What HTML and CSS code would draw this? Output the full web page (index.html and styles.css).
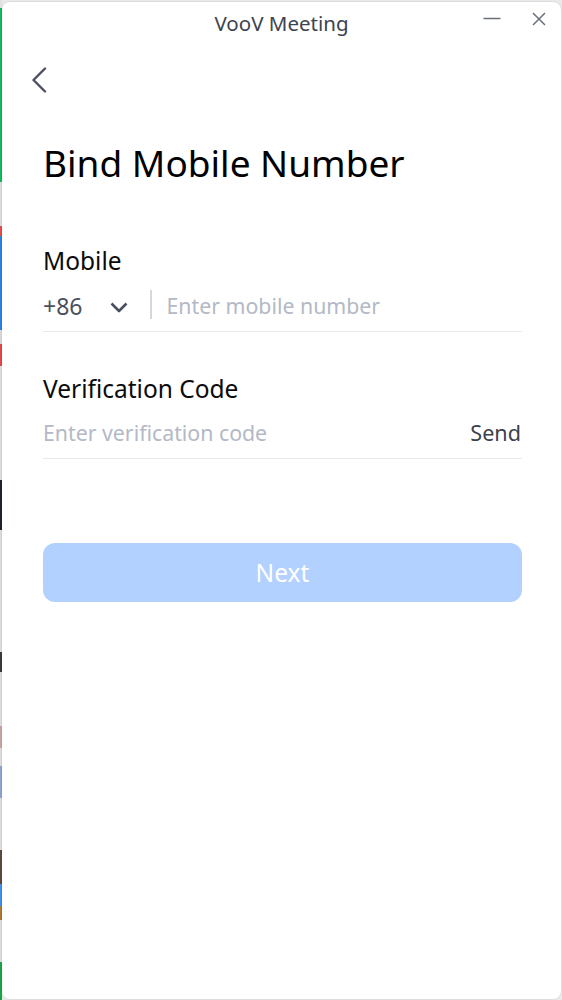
FILE: index.html
```html
<!DOCTYPE html>
<html lang="en">
<head>
<meta charset="utf-8">
<title>VooV Meeting</title>
<link rel="stylesheet" href="styles.css">
</head>
<body>
<div class="desktop">
  <div class="edge"></div>
  <div class="window">
    <header class="titlebar">
      <div class="tb-spacer"></div>
      <div class="tb-title">VooV Meeting</div>
      <div class="tb-controls">
        <svg class="ctl ctl-min" width="18" height="14" viewBox="0 0 18 14" aria-label="Minimize"><path d="M0.5 6.5 H17.5" stroke="#6a6f7c" stroke-width="1.5" fill="none"/></svg>
        <svg class="ctl ctl-close" width="14" height="14" viewBox="0 0 14 14" aria-label="Close"><path d="M1 1 L13 13 M13 1 L1 13" stroke="#6a6f7c" stroke-width="1.5" fill="none"/></svg>
      </div>
    </header>

    <div class="back-row">
      <svg class="back" width="16" height="26" viewBox="0 0 16 26" aria-label="Back"><path d="M14 1.5 L2.5 13 L14 24.5" stroke="#4b5060" stroke-width="2.4" fill="none" stroke-linecap="round" stroke-linejoin="round"/></svg>
    </div>

    <main class="content">
      <h1 class="heading">Bind Mobile Number</h1>

      <div class="field field-mobile">
        <label class="label">Mobile</label>
        <div class="row">
          <div class="country">
            <span class="code">+86</span>
            <svg class="chev" width="18" height="11" viewBox="0 0 18 11"><path d="M1.5 1.5 L9 9 L16.5 1.5" stroke="#4b5060" stroke-width="2.6" fill="none" stroke-linejoin="round"/></svg>
          </div>
          <span class="divider"></span>
          <input class="input input-phone" type="text" placeholder="Enter mobile number">
        </div>
      </div>

      <div class="field field-code">
        <label class="label">Verification Code</label>
        <div class="row">
          <input class="input input-code" type="text" placeholder="Enter verification code">
          <span class="send">Send</span>
        </div>
      </div>

      <button class="next" type="button">Next</button>
    </main>
  </div>
</div>
</body>
</html>
```

FILE: styles.css
```css
* { box-sizing: border-box; }

html, body {
  margin: 0;
  padding: 0;
  height: 1000px;
  background: #e9e9e9;
  font-family: "Noto Sans", "Open Sans", sans-serif;
  overflow: hidden;
}

.desktop {
  display: flex;
  height: 1000px;
}

.edge {
  width: 2px;
  flex: 0 0 2px;
  height: 1000px;
  background: linear-gradient(to bottom,
    #e0e0e0 0px, #e0e0e0 8px,
    #15b75b 8px, #15b75b 182px,
    #dcdcdc 182px, #dcdcdc 226px,
    #e24c4c 226px, #e24c4c 236px,
    #2b7fe2 236px, #2b7fe2 330px,
    #d8d8d8 330px, #d8d8d8 344px,
    #e04848 344px, #e04848 366px,
    #dcdcdc 366px, #dcdcdc 480px,
    #1f232b 480px, #1f232b 530px,
    #dcdcdc 530px, #dcdcdc 652px,
    #3a3a3a 652px, #3a3a3a 672px,
    #dcdcdc 672px, #dcdcdc 726px,
    #c9a3a0 726px, #c9a3a0 748px,
    #dcdcdc 748px, #dcdcdc 766px,
    #8ea3d2 766px, #8ea3d2 798px,
    #dcdcdc 798px, #dcdcdc 850px,
    #5a4b3c 850px, #5a4b3c 884px,
    #3d8fe8 884px, #3d8fe8 906px,
    #a8792e 906px, #a8792e 920px,
    #dcdcdc 920px, #dcdcdc 962px,
    #1aa24b 962px, #1aa24b 1000px);
}

.window {
  flex: 1;
  margin: 2px 1px 1px 0;
  height: 997px;
  background: #ffffff;
  border-radius: 8px;
  box-shadow: 0 0 0 1px rgba(0, 0, 0, 0.05);
  display: flex;
  flex-direction: column;
}

/* title bar */
.titlebar {
  height: 44px;
  display: grid;
  grid-template-columns: 1fr auto 1fr;
  align-items: start;
}

.tb-title {
  font-size: 20.5px;
  line-height: 43px;
  color: #3d4350;
  white-space: nowrap;
}

.tb-controls {
  justify-self: end;
  display: flex;
  align-items: center;
  gap: 31px;
  padding-top: 10px;
  padding-right: 15px;
}

.ctl { display: block; }

/* back */
.back-row {
  padding: 21px 0 0 29px;
  height: 47px;
}

.back { display: block; }

/* content */
.content {
  padding: 0 39px 0 41px;
  display: flex;
  flex-direction: column;
}

.heading {
  margin: 46px 0 0 0;
  font-size: 37px;
  line-height: 48px;
  font-weight: 400;
  color: #000000;
  white-space: nowrap;
}

.field-mobile { margin-top: 59px; }
.field-code { margin-top: 42px; }

.label {
  display: block;
  font-size: 24.5px;
  line-height: 30px;
  color: #0b0b0b;
}

.row {
  display: flex;
  align-items: center;
  border-bottom: 1px solid #e8eaef;
}

.field-mobile .row {
  margin-top: 5px;
  height: 51px;
}

.field-code .row {
  margin-top: 4px;
  height: 51px;
}

.country {
  width: 86px;
  flex: 0 0 86px;
  display: flex;
  align-items: center;
  justify-content: space-between;
  padding-right: 1px;
}

.code {
  font-size: 23px;
  line-height: 1;
  color: #4b505d;
}

.chev { display: block; margin-top: 2px; }

.divider {
  width: 1.5px;
  height: 29px;
  margin-left: 21px;
  background: #d3d7de;
  flex: 0 0 auto;
  margin-top: -3px;
}

.input {
  flex: 1;
  min-width: 0;
  border: none;
  outline: none;
  background: transparent;
  padding: 0;
  font-family: "Noto Sans", "Open Sans", sans-serif;
  font-size: 21.3px;
  line-height: 30px;
  height: 30px;
  color: #333;
}

.input::placeholder {
  color: #b3b9c5;
  opacity: 1;
}

.input-phone { margin-left: 15px; }
.input-code { margin-left: 0; }

.send {
  font-size: 21.6px;
  line-height: 30px;
  color: #3c414c;
  padding-right: 1px;
}

.next {
  margin-top: 84px;
  height: 59px;
  width: 100%;
  border: none;
  border-radius: 12px;
  background: #b3d1fe;
  color: #ffffff;
  font-family: "Noto Sans", "Open Sans", sans-serif;
  font-size: 24.5px;
  padding: 0;
}
```
